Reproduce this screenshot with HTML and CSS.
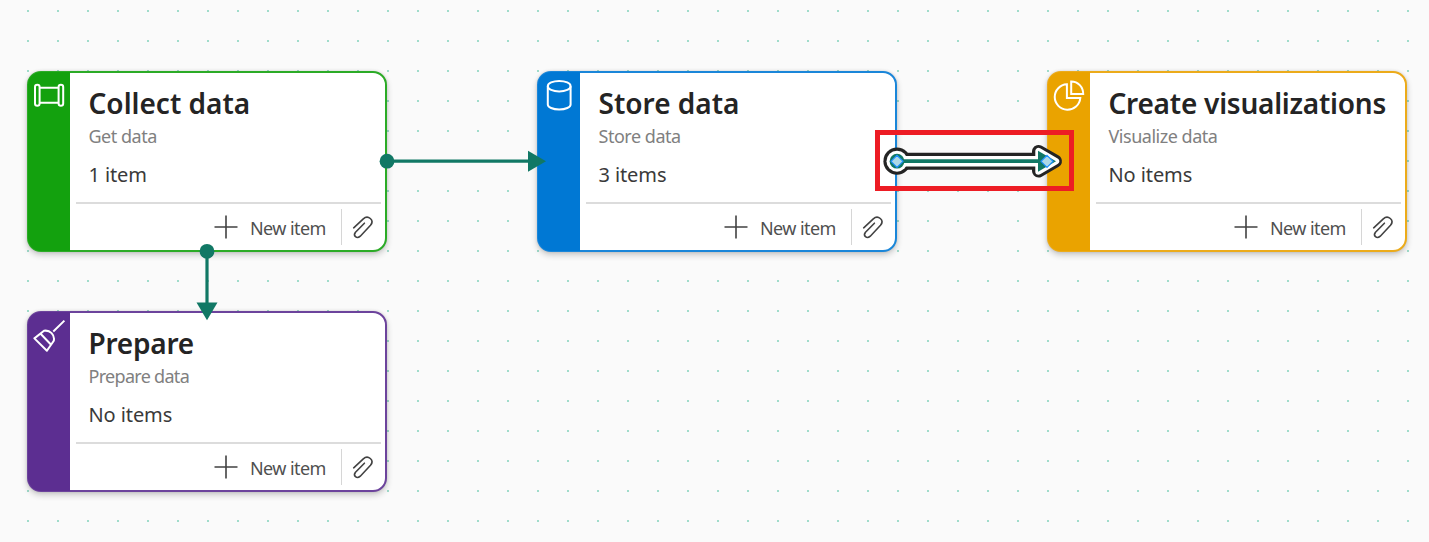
FILE: index.html
```
<!DOCTYPE html>
<html lang="en">
<head>
<meta charset="utf-8">
<title>Task flow</title>
<link rel="stylesheet" href="styles.css">
</head>
<body>
<svg width="0" height="0" class="defs" aria-hidden="true">
  <symbol id="plus" viewBox="0 0 24 24"><path d="M12 .5v23M.5 12h23" fill="none" stroke="#424242" stroke-width="1.6"/></symbol>
  <symbol id="clip" viewBox="0 0 24 26"><path d="M2.2 12.8 11.8 3.8C16.6-.6 23.3 5.3 19 10.3L8.8 21.2C5.2 24.3 1.2 20.8 4 17.2L12.9 8.2" transform="translate(-.5 1)" fill="none" stroke="#424242" stroke-width="1.6" stroke-linecap="round"/></symbol>
</svg>
<main class="canvas">
  <article class="card collect">
    <div class="rail"><svg class="icon" viewBox="0 0 34 34"><g fill="none" stroke="#fff" stroke-width="2"><rect x="3" y="6.7" width="4.6" height="21" rx="2.3"/><rect x="26.6" y="6.7" width="4.6" height="21" rx="2.3"/><path d="M7.6 9.8h19M7.6 24.8h19"/></g></svg></div>
    <div class="body">
      <h2 class="title">Collect data</h2><p class="kind">Get data</p><p class="count">1 item</p>
      <footer class="actions"><svg class="plus"><use href="#plus"/></svg><span class="new">New item</span><span class="attach"><svg class="clip"><use href="#clip"/></svg></span></footer>
    </div>
  </article>
  <article class="card store">
    <div class="rail"><svg class="icon" viewBox="0 0 34 34"><g fill="none" stroke="#fff" stroke-width="2"><ellipse cx="17.2" cy="8.2" rx="11.4" ry="5.3"/><path d="M5.8 8.2v18.2c0 2.9 5 5.1 11.4 5.1s11.4-2.2 11.4-5.1V8.2"/></g></svg></div>
    <div class="body">
      <h2 class="title">Store data</h2><p class="kind">Store data</p><p class="count">3 items</p>
      <footer class="actions"><svg class="plus"><use href="#plus"/></svg><span class="new">New item</span><span class="attach"><svg class="clip"><use href="#clip"/></svg></span></footer>
    </div>
  </article>
  <article class="card visualize">
    <div class="rail"><svg class="icon" viewBox="0 0 34 34"><g fill="none" stroke="#fff" stroke-width="2"><path d="M14.9 6.2A12.8 12.8 0 1 0 28.3 20H14.9z"/><path d="M19.2 3.5c7 0 12 5.6 12 12.5h-12z"/></g></svg></div>
    <div class="body">
      <h2 class="title long">Create visualizations</h2><p class="kind">Visualize data</p><p class="count">No items</p>
      <footer class="actions"><svg class="plus"><use href="#plus"/></svg><span class="new">New item</span><span class="attach"><svg class="clip"><use href="#clip"/></svg></span></footer>
    </div>
  </article>
  <article class="card prepare">
    <div class="rail"><svg class="icon" viewBox="0 0 34 34"><g fill="none" stroke="#fff" stroke-width="2" stroke-linejoin="round"><path d="M32.4 2.6 21.3 13.5M2.4 20.4 14.9 32.8 21.8 22.8A8.4 8.4 0 0 0 12 12.8zM8.6 15.8 19.1 26.7"/></g></svg></div>
    <div class="body">
      <h2 class="title long">Prepare</h2><p class="kind tight">Prepare data</p><p class="count">No items</p>
      <footer class="actions"><svg class="plus"><use href="#plus"/></svg><span class="new">New item</span><span class="attach"><svg class="clip"><use href="#clip"/></svg></span></footer>
    </div>
  </article>
  <svg class="connectors" viewBox="0 0 1429 542">
    <g fill="#117865" stroke="none">
      <path d="M387 159.6h143v3.2H387z"/><circle cx="387" cy="161.2" r="7.4"/><path d="M528 150.7 546 161.2 528 171.8z"/>
      <path d="M205.4 251h3.2v53h-3.2z"/><circle cx="207" cy="251.3" r="7.4"/><path d="M196.5 302.6h21L207 320.3z"/>
    </g>
    <g stroke-linejoin="round">
      <g fill="#242424" stroke="#242424"><circle cx="897" cy="161.2" r="13.6" stroke="none"/><path d="M897 161.2h142" stroke-width="17"/><path d="M1038.5 151.5v19.5L1055.5 161.2z" stroke-width="13"/></g>
      <g fill="#fff" stroke="#fff"><circle cx="897" cy="161.2" r="10.5" stroke="none"/><path d="M1038.5 151v20.5L1056 161.2z" stroke-width="6.4"/></g>
      <path d="M897 161.2h142" stroke="#fff" stroke-width="10.5"/>
      <path d="M897 161.2h143" stroke="#117865" stroke-width="3.8"/><circle cx="897" cy="161.2" r="7.4" fill="#117865"/><path d="M1038 150.7 1056 161.2 1038 171.8z" fill="#117865"/>
      <g fill="#add8e6" stroke="#1e90ff" stroke-width="1.2" stroke-linejoin="miter"><path d="M897 155.3l6 6-6 6-6-6zM1047 155.3l6 6-6 6-6-6z"/></g>
    </g>
    <rect x="877.5" y="132.5" width="194" height="56" fill="none" stroke="#ed1c24" stroke-width="5"/>
  </svg>
</main>
</body>
</html>
```
FILE: styles.css
```
* { box-sizing: border-box; }
body { margin: 0; font-family: "Noto Sans", "Open Sans", sans-serif; }
h2, p { margin: 0; white-space: nowrap; }
.defs { position: absolute; }
.canvas {
  position: relative; width: 1429px; height: 542px; overflow: hidden;
  background-color: #fafafa;
  background-image: radial-gradient(circle at 1px 1px, #a0dccb 0 .8px, transparent 1.3px);
  background-size: 30px 30px; background-position: 27px 10px;
}
.card {
  position: absolute; width: 360px; height: 181px; display: flex;
  border: 2px solid var(--edge); border-radius: 14px; background: #fff;
  box-shadow: 0 3px 6px rgba(0,0,0,.2), 0 0 3px rgba(0,0,0,.12);
}
.collect { left: 27px; top: 71px; --accent: #13a10e; --edge: #2bab26; }
.store { left: 537px; top: 71px; --accent: #0078d4; --edge: #1a86d9; }
.visualize { left: 1047px; top: 71px; --accent: #eaa300; --edge: #ecab1a; }
.prepare { left: 27px; top: 311px; --accent: #5c2e91; --edge: #6c439c; }
.rail { width: 42px; flex: none; background: var(--accent); padding: 6px 0 0 4px; margin: -1px 0 -1px -1px; border-radius: 13px 0 0 13px; }
.icon { width: 34px; height: 34px; display: block; }
.body { flex: 1; min-width: 0; padding: 10px 4px 0 6px; display: flex; flex-direction: column; }
.title { font-weight: 600; font-size: 28px; line-height: 40px; color: #242424; padding-left: 12.5px; }
.long { letter-spacing: -.24px; }
.kind { font-size: 18px; line-height: 26px; letter-spacing: -.48px; color: #808080; padding-left: 12.5px; }
.tight { letter-spacing: -.7px; }
.count { font-size: 20px; line-height: 28px; letter-spacing: -.1px; color: #3a3a3a; padding: 12px 0 0 12.5px; height: 53px; }
.actions { border-top: 2px solid #dcdcdc; height: 49px; display: flex; align-items: center; justify-content: flex-end; }
.plus { width: 24px; height: 24px; }
.new { font-size: 18px; letter-spacing: -.58px; color: #505050; width: 76px; margin: 2px 15px 0 12px; white-space: nowrap; }
.attach { border-left: 1px solid #d6d6d6; height: 36px; padding: 5px 5px 0 10px; }
.clip { width: 24px; height: 26px; display: block; }
.connectors { position: absolute; inset: 0; width: 1429px; height: 542px; }
```
